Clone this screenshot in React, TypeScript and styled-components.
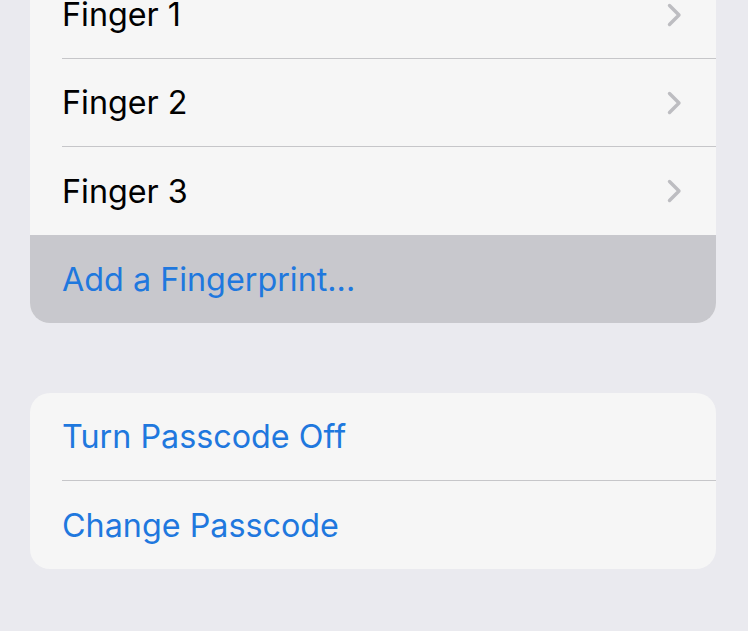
import React from "react";
import styled, { createGlobalStyle } from "styled-components";

const Global = createGlobalStyle`
  html, body {
    margin: 0;
    padding: 0;
    background: #eaeaef;
    overflow: hidden;
  }
  body {
    font-family: Inter, "Noto Sans", "Liberation Sans", sans-serif;
    -webkit-font-smoothing: antialiased;
  }
`;

const Screen = styled.div`
  width: 748px;
  height: 631px;
  background: #eaeaef;
  display: flex;
  flex-direction: column;
  gap: 70px;
  overflow: hidden;
`;

const Group = styled.div<{ $offset?: number }>`
  margin: ${(p) => p.$offset ?? 0}px 32px 0 30px;
  background: #f6f6f6;
  border-radius: 20px;
  overflow: hidden;
  display: flex;
  flex-direction: column;
`;

const Row = styled.div<{ $divider?: boolean; $pressed?: boolean }>`
  position: relative;
  height: ${(p) => (p.$divider ? 87 : 88)}px;
  margin-bottom: ${(p) => (p.$divider ? 1 : 0)}px;
  display: flex;
  align-items: center;
  justify-content: space-between;
  padding: 0 34px 0 32px;
  background: ${(p) => (p.$pressed ? "#c8c8cd" : "transparent")};

  &::after {
    content: "";
    display: ${(p) => (p.$divider ? "block" : "none")};
    position: absolute;
    left: 32px;
    right: 0;
    bottom: -1px;
    height: 1px;
    background: #c6c6c9;
  }
`;

const Label = styled.span<{ $action?: boolean }>`
  font-size: 32.3px;
  letter-spacing: 0;
  color: ${(p) => (p.$action ? "#1f78de" : "#000000")};
`;

const Chevron = () => (
  <svg width="15" height="24" viewBox="0 0 15 24" fill="none">
    <path
      d="M2.5 2.5 L12 12 L2.5 21.5"
      stroke="#bdbdc1"
      strokeWidth="3.4"
      strokeLinecap="round"
      strokeLinejoin="round"
    />
  </svg>
);

const fingers = ["Finger 1", "Finger 2", "Finger 3"];

export default function App() {
  return (
    <>
      <Global />
      <Screen>
        <Group $offset={-29}>
          {fingers.map((f, i) => (
            <Row key={f} $divider={i < fingers.length - 1}>
              <Label>{f}</Label>
              <Chevron />
            </Row>
          ))}
          <Row $pressed>
            <Label $action>Add a Fingerprint...</Label>
          </Row>
        </Group>
        <Group>
          <Row $divider>
            <Label $action>Turn Passcode Off</Label>
          </Row>
          <Row>
            <Label $action>Change Passcode</Label>
          </Row>
        </Group>
      </Screen>
    </>
  );
}
